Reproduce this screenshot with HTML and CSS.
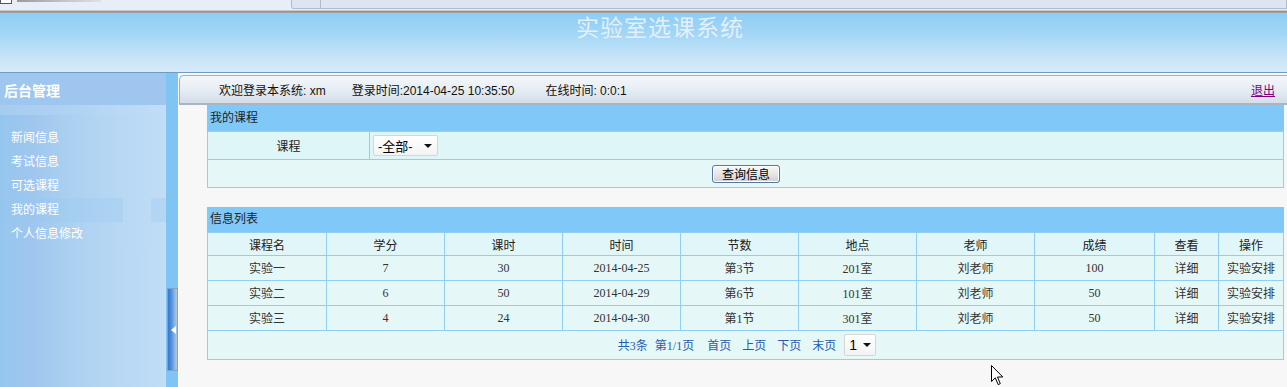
FILE: index.html
```html
<!DOCTYPE html>
<html lang="zh-CN">
<head>
<meta charset="utf-8">
<title>实验室选课系统</title>
<link rel="stylesheet" href="styles.css">
</head>
<body>
<div class="chrome">
  <span class="chrome-icon"></span>
  <span class="chrome-blur"></span>
  <div class="chrome-box"><span class="chrome-div"></span></div>
</div>
<header class="banner"><h1>实验室选课系统</h1></header>
<div class="main">
  <aside class="sidebar">
    <div class="side-title">后台管理</div>
    <div class="side-band"></div>
    <ul class="menu">
      <li>新闻信息</li>
      <li>考试信息</li>
      <li>可选课程</li>
      <li class="active">我的课程</li>
      <li>个人信息修改</li>
    </ul>
  </aside>
  <div class="splitter">
    <div class="handle"><svg width="5" height="8" viewBox="0 0 5 8"><path d="M5 0 L0 4 L5 8 Z" fill="#fff"/></svg></div>
  </div>
  <section class="content">
    <div class="infobar">
      <span class="info welcome">欢迎登录本系统: xm</span>
      <span class="info login">登录时间:2014-04-25 10:35:50</span>
      <span class="info">在线时间: 0:0:1</span>
      <a class="logout" href="#">退出</a>
    </div>

    <div class="panel">
      <div class="panel-head">我的课程</div>
      <table class="grid query">
        <colgroup><col class="c-label"><col></colgroup>
        <tr class="r1">
          <td class="lbl">课程</td>
          <td class="field"><span class="select">-全部-<i class="caret"></i></span></td>
        </tr>
        <tr class="r2">
          <td colspan="2" class="center"><button class="btn">查询信息</button></td>
        </tr>
      </table>
    </div>

    <div class="panel list">
      <div class="panel-head">信息列表</div>
      <table class="grid data">
        <colgroup>
          <col class="w119"><col class="w118"><col class="w118"><col class="w118"><col class="w118">
          <col class="w118"><col class="w118"><col class="w120"><col class="w64"><col class="w65">
        </colgroup>
        <tr class="thead">
          <td>课程名</td><td>学分</td><td>课时</td><td>时间</td><td>节数</td>
          <td>地点</td><td>老师</td><td>成绩</td><td>查看</td><td>操作</td>
        </tr>
        <tr class="row">
          <td>实验一</td><td>7</td><td>30</td><td>2014-04-25</td><td>第3节</td>
          <td>201室</td><td>刘老师</td><td>100</td><td>详细</td><td>实验安排</td>
        </tr>
        <tr class="row">
          <td>实验二</td><td>6</td><td>50</td><td>2014-04-29</td><td>第6节</td>
          <td>101室</td><td>刘老师</td><td>50</td><td>详细</td><td>实验安排</td>
        </tr>
        <tr class="row">
          <td>实验三</td><td>4</td><td>24</td><td>2014-04-30</td><td>第1节</td>
          <td>301室</td><td>刘老师</td><td>50</td><td>详细</td><td>实验安排</td>
        </tr>
        <tr class="pager-row">
          <td colspan="10">
            <div class="pager">
              <span class="pg-total">共3条</span>
              <span class="pg-page">第1/1页</span>
              <a href="#">首页</a>
              <a href="#">上页</a>
              <a href="#">下页</a>
              <a href="#">末页</a>
              <span class="select small">1<i class="caret"></i></span>
            </div>
          </td>
        </tr>
      </table>
    </div>
  </section>
</div>
<svg class="cursor" width="13" height="21" viewBox="0 0 13 21"><path d="M0.5 0.5 L0.5 16.5 L4.3 12.8 L7.2 19.6 L9.3 18.7 L6.5 12 L11.8 12 Z" fill="#fff" stroke="#000" stroke-width="1"/></svg>
</body>
</html>
```

FILE: styles.css
```css
* { box-sizing: border-box; }
html, body { margin: 0; padding: 0; }
body {
  width: 1287px;
  height: 387px;
  overflow: hidden;
  position: relative;
  background: #f7f7f7;
  font: 12px "Liberation Sans", "Noto Sans CJK SC", sans-serif;
  color: #222;
}

/* browser chrome remnant */
.chrome {
  height: 13px;
  display: flex;
  align-items: flex-start;
  background: linear-gradient(#e8edf7 0, #e8edf7 10px, #c6c9cc 10px, #c6c9cc 11px, #8d8f91 11px, #a3a5a7 13px);
}
.chrome-icon {
  width: 12px; height: 4px;
  border: 1px solid #555; border-top: none;
  background: #fff;
}
.chrome-blur {
  margin-left: 5px;
  width: 84px; height: 2px;
  background: linear-gradient(to right, #9a9a9a, #c4c7cd 60%, #dde1e8);
}
.chrome-box {
  margin-left: 190px;
  flex: 1;
  height: 9px;
  background: #dde4f2;
  border: 1px solid #b4bbc8;
  border-top: none;
  border-radius: 0 0 0 3px;
  display: flex;
}
.chrome-div { margin-left: 28px; width: 1px; height: 8px; background: #b4bbc8; }

/* banner */
.banner {
  height: 60px;
  background: linear-gradient(#8ecdf4 0, #a3d6f6 35%, #c2e2f8 70%, #d7eaf9 98%);
  border-bottom: 1px solid #6e9cc2;
  text-align: center;
}
.banner h1 {
  margin: 0;
  padding-left: 33px;
  font: 400 23px/26px "Noto Sans CJK SC", sans-serif;
  letter-spacing: 1px;
  color: #e2f0fa;
}

/* main area */
.main {
  display: flex;
  height: 314px;
}
.sidebar {
  width: 168px;
  background: linear-gradient(to right, #95c6ee 0, #a0c6ef 20%, #a9d0f0 40%, #b3d5f3 60%, #bad9f4 80%, #c2ddf6 100%);
}
.side-title {
  height: 32px;
  padding-left: 4px;
  background: #9ec6ef;
  color: #fff;
  font: 700 14px/34px "Noto Sans CJK SC", sans-serif;
}
.side-band {
  height: 10px;
  background: linear-gradient(to right, #a5ccef, #aed2f2 40%, #b8d8f5 70%, #c2ddf6);
}
.menu {
  list-style: none;
  margin: 0;
  padding: 11px 0 0 0;
}
.menu li {
  height: 24px;
  line-height: 24px;
  padding-left: 11px;
  color: #fff;
  font-size: 12px;
}
.menu li.active {
  background: linear-gradient(to right, rgba(150,198,238,0.3) 0, rgba(150,198,238,0.3) 123px, transparent 123px, transparent 151px, rgba(150,198,238,0.3) 151px);
}

.splitter {
  width: 12px;
  background: #80c4f4;
  display: flex;
  flex-direction: column;
}
.handle {
  margin-top: 215px;
  margin-left: 1px;
  width: 11px;
  height: 83px;
  background: linear-gradient(to right, #3a76cc 0, #5592dc 40%, #8ab8ea 75%, #b8c4d0 100%);
  border: 1px solid #7aa4cc;
  display: flex;
  align-items: center;
  justify-content: center;
}
.handle svg { display: block; margin-left: 1px; }

.content {
  flex: 1;
  background: #f7f7f7;
  border-left: 1px solid #fdfdfd;
  padding-top: 2px;
}

.infobar {
  height: 30px;
  display: flex;
  align-items: center;
  padding-left: 39px;
  padding-right: 12px;
  background: linear-gradient(#f4f7fa 0, #e8eef4 45%, #d4dee8 100%);
  border-top: 1px solid #8fb4d6;
  border-left: 1px solid #8fb4d6;
  border-bottom: 2px solid #a9b5c1;
  border-top-left-radius: 5px;
  color: #111;
}
.info { white-space: nowrap; }
.info.welcome { margin-right: 26px; }
.info.login { margin-right: 31px; }
.logout {
  margin-left: auto;
  color: #800080;
  text-decoration: underline;
}

/* panels */
.panel {
  margin: 0 3px 0 28px;
}
.panel.list { margin-top: 19px; }
.panel-head {
  height: 26px;
  line-height: 26px;
  padding-left: 3px;
  background: #80c8f8;
  color: #222;
}
.panel.list .panel-head { height: 25px; line-height: 24px; }

.grid {
  width: 100%;
  border-collapse: collapse;
  table-layout: fixed;
}
.grid td {
  border: 1px solid #8fcff5;
  padding: 0;
}
.query .c-label { width: 162px; }
.query .r1 td { height: 28px; background: #dff6f8; }
.query .r2 td { height: 28px; background: #e5f7f7; }
.query .lbl { text-align: center; }
.query .field { padding-left: 3px; }
.center { text-align: center; }

.select {
  display: inline-flex;
  align-items: center;
  width: 65px;
  height: 21px;
  padding-left: 4px;
  background: linear-gradient(#ffffff, #f3f3f3);
  border: 1px solid #d6d6d6;
  border-radius: 2px;
  color: #000;
  font-size: 13px;
  vertical-align: middle;
}
.caret {
  margin-left: auto;
  margin-right: 5px;
  width: 0; height: 0;
  border-left: 4px solid transparent;
  border-right: 4px solid transparent;
  border-top: 4px solid #111;
}
.btn {
  width: 68px;
  height: 18px;
  padding: 0;
  margin-left: 1px;
  font: 12px/16px "Noto Sans CJK SC", sans-serif;
  color: #000;
  background: linear-gradient(#f8f8f8 0, #e6e6e6 50%, #cfcfcf 100%);
  border: 1px solid #57779c;
  border-radius: 3px;
  box-shadow: inset 0 0 0 1px #ffffff;
  vertical-align: middle;
}

.data col.w119 { width: 119px; }
.data col.w118 { width: 118px; }
.data col.w120 { width: 120px; }
.data col.w64 { width: 64px; }
.data col.w65 { width: 65px; }
.data td {
  text-align: center;
  color: #333;
  font: 12px "Liberation Serif", "Noto Sans CJK SC", serif;
}
.data .thead td { height: 23px; background: #e0f6f8; color: #222; font-family: "Noto Sans CJK SC", sans-serif; }
.data .row td { height: 25px; background: #e6f7f7; }
.data .pager-row td { height: 29px; background: #e6f7f7; }

.pager {
  display: flex;
  justify-content: center;
  align-items: center;
  gap: 11px;
  padding-left: 3px;
  color: #1f5db0;
}
.pager a { color: #1f5db0; text-decoration: none; }
.pager .pg-total { margin-right: -4px; }
.pager .pg-page { margin-right: 2px; }
.pager .select.small { width: 32px; height: 22px; margin-left: -3px; font-family: "Liberation Sans", sans-serif; font-size: 14px; }
.pager .select.small .caret { margin-right: 4px; }

.cursor {
  position: absolute;
  left: 991px;
  top: 365px;
}
```
